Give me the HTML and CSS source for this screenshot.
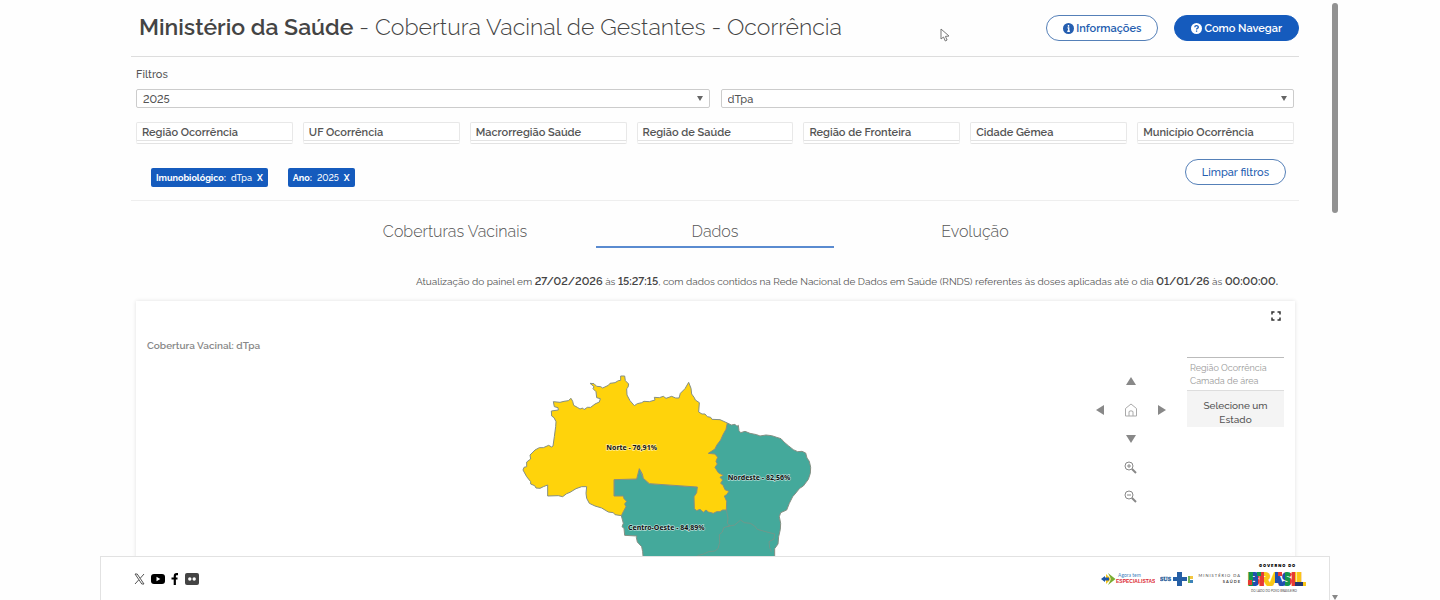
FILE: index.html
```html
<!DOCTYPE html>
<html lang="pt-BR">
<head>
  <meta charset="UTF-8">
  <title>Cobertura Vacinal de Gestantes</title>
  <link rel="stylesheet" href="styles.css">
</head>
<body>
  <div class="frame">
    <div class="app">
      <main class="content">
        <header class="header">
          <h1><strong>Ministério da Saúde</strong> - Cobertura Vacinal de Gestantes - Ocorrência</h1>
          <div class="header-actions">
            <button class="pill">
              <svg width="11" height="11" viewBox="0 0 16 16"><circle cx="8" cy="8" r="8" fill="currentColor"/><path d="M8 3v2.400M6.500 7H8.300V12M6.200 12h3.800" stroke="#fff" stroke-width="2" fill="none"/></svg>
              Informações
            </button>
            <button class="pill pill-primary">
              <svg width="11" height="11" viewBox="0 0 16 16"><circle cx="8" cy="8" r="8" fill="currentColor"/><path d="M5.500 6.200C5.500 3.200 10.600 3.200 10.600 6c0 1.800-2.500 1.700-2.500 3.600M8.100 10.800v2" stroke="#155bbd" stroke-width="1.900" fill="none"/></svg>
              Como Navegar
            </button>
          </div>
        </header>

        <!-- Filtros -->
        <section class="filters">
          <h2>Filtros</h2>
          <div class="selects">
            <div class="select"><select aria-label="Ano"><option>2025</option></select></div>
            <div class="select"><select aria-label="Imunobiológico"><option>dTpa</option></select></div>
          </div>
          <div class="fields">
            <button class="field">Região Ocorrência</button>
            <button class="field">UF Ocorrência</button>
            <button class="field">Macrorregião Saúde</button>
            <button class="field">Região de Saúde</button>
            <button class="field">Região de Fronteira</button>
            <button class="field">Cidade Gêmea</button>
            <button class="field">Município Ocorrência</button>
          </div>
          <div class="applied">
            <div class="chips">
              <button class="chip"><b>Imunobiológico:</b> <span>dTpa</span> <b>X</b></button>
              <button class="chip"><b>Ano:</b> <span>2025</span> <b>X</b></button>
            </div>
            <button class="pill pill-clear">Limpar filtros</button>
          </div>
        </section>

        <nav class="tabs">
          <a href="#coberturas">Coberturas Vacinais</a>
          <a href="#dados" class="active">Dados</a>
          <a href="#evolucao">Evolução</a>
        </nav>

        <p class="update">Atualização do painel em <b>27/02/2026</b> às <b>15:27:15</b>, com dados contidos na Rede Nacional de Dados em Saúde (RNDS) referentes às doses aplicadas até o dia <b>01/01/26</b> às <b>00:00:00.</b></p>

        <!-- Mapa -->
        <section class="card">
          <div class="card-top">
            <button class="icon-btn" aria-label="Tela cheia">
              <svg width="10" height="10" viewBox="0 0 10 10"><path d="M1 3.500V1h2.500M6.500 1H9v2.500M9 6.500V9H6.500M3.500 9H1V6.500" fill="none" stroke="#333" stroke-width="1.500"/></svg>
            </button>
          </div>
          <div class="card-body">
            <h3>Cobertura Vacinal: dTpa</h3>
            <svg class="map" width="294" height="184" viewBox="60 36 882 552">
              <g stroke="#858f83" stroke-width="3" stroke-linejoin="round">
                <path fill="#44a99b" d="M682 189L694 195 705 193 711 199 715 196 717 212 722 218 735 214 750 220 770 224 780 228 798 225 815 227 830 232 843 236 852 246 865 257 880 269 893 275 906 274 917 279 921 294 928 304 932 322 931 340 925 358 910 378 899 385 885 402 878 410 868 430 860 450 842 458 838 470 842 490 841 508 836 530 834 552 824 566 824 600 430 600 428 575 425 560 412 546 409 532 411 528 374 526 372 505 366 500 370 490 364 467 342 408 342 359 410 357 418 326 430 355 448 371 592 381 625 280z"/>
                <path fill="#ffd30b" d="M159 258L163 230 167 200 168 185 162 173 155 168 154 153 175 150 174 143 163 140 160 125 180 127 192 124 205 122 213 115 218 124 221 136 232 142 240 147 248 144 252 149 262 142 272 142 285 132 298 126 301 116 290 113 288 95 279 86 282 80 270 70 282 71 290 79 302 80 308 84 325 76 330 70 345 68 355 62 362 61 362 48 374 48 376 62 386 72 384 82 380 86 381 105 390 122 403 137 412 131 425 128 432 124 448 125 465 120 463 112 478 113 490 109 498 115 515 109 527 114 537 114 541 100 555 86 566 67 573 85 575 102 583 113 586 120 598 128 596 156 606 162 615 162 622 170 632 172 636 178 660 179 682 189 678 208 669 224 662 240 650 256 645 267 625 280 645 282 653 292 648 304 652 312 645 322 655 338 670 346 660 352 668 360 662 370 669 375 675 389 687 394 680 404 673 408 680 424 679 450 668 450 660 455 650 455 640 460 625 456 618 450 610 457 600 448 590 452 583 446 582 410 590 398 592 381 448 371 430 355 427 342 418 326 410 357 342 359 342 408 370 408 372 416 380 424 374 432 378 440 370 455 364 467 345 464 340 458 325 456 305 444 285 438 268 430 260 415 258 400 260 380 245 380 228 386 210 397 200 401 188 410 175 407 143 408 143 375 130 380 120 385 108 384 104 377 92 372 92 365 80 350 69 330 72 322 80 320 80 306 92 297 90 285 105 270 118 263 130 263 146 256 155 261z"/>
                <path fill="none" stroke-width="2" d="M679 450L684 474 682 490 690 497 671 503 667 516 658 524 659 548 654 566 644 573 626 575 611 582 592 587M683 499L704 495 722 480 733 488 751 490 764 498 772 508 797 515 824 522 822 537 807 545 809 563 814 575"/>
              </g>
              <g class="map-labels">
                <text x="319" y="271">Norte - 76,91%</text>
                <text x="683" y="359">Nordeste - 82,56%</text>
                <text x="384" y="511">Centro-Oeste - 84,89%</text>
              </g>
            </svg>
            <div class="tools">
              <div class="pad">
                <button class="up" aria-label="Mover para cima"><svg width="10" height="8" viewBox="0 0 10 8"><path d="M0 8L5 0l5 8z"/></svg></button>
                <button class="left" aria-label="Mover para a esquerda"><svg width="8" height="10" viewBox="0 0 8 10"><path d="M8 0L0 5l8 5z"/></svg></button>
                <button class="home" aria-label="Posição inicial"><svg width="14" height="14" viewBox="0 0 14 14"><path d="M1.500 13V5.500L7 1l5.500 4.500V13zM5 13V8.500Q7 7 9 8.500V13" fill="none" stroke="#aaa"/></svg></button>
                <button class="right" aria-label="Mover para a direita"><svg width="8" height="10" viewBox="0 0 8 10"><path d="M0 0l8 5-8 5z"/></svg></button>
                <button class="down" aria-label="Mover para baixo"><svg width="10" height="8" viewBox="0 0 10 8"><path d="M0 0h10L5 8z"/></svg></button>
                <button class="in" aria-label="Aumentar zoom"><svg width="13" height="13" viewBox="0 0 13 13"><g fill="none" stroke="#888"><circle cx="5" cy="5" r="4"/><path d="M3 5h4M5 3v4"/><path d="M8 8l4 4" stroke-width="2"/></g></svg></button>
                <button class="out" aria-label="Diminuir zoom"><svg width="13" height="13" viewBox="0 0 13 13"><g fill="none" stroke="#888"><circle cx="5" cy="5" r="4"/><path d="M3 5h4"/><path d="M8 8l4 4" stroke-width="2"/></g></svg></button>
              </div>
              <div class="legend">
                <div class="legend-title">Região Ocorrência<br>Camada de área</div>
                <div class="legend-value">Selecione um Estado</div>
              </div>
            </div>
          </div>
        </section>
      </main>

      <footer class="footer">
        <div class="social">
          <a href="#x" aria-label="X"><svg width="11" height="12" viewBox="0 0 11 12"><path d="M1 1h2.200L10 11H7.800zM10 1L6.300 5.200M4.700 6.900L1 11" fill="none" stroke="#555"/></svg></a>
          <a href="#youtube" aria-label="YouTube"><svg width="14" height="12" viewBox="0 0 14 12"><rect y="1" width="14" height="10" rx="3"/><path d="M5.500 3.800v4.400L9.300 6z" fill="#fff"/></svg></a>
          <a href="#facebook" aria-label="Facebook"><svg width="8" height="12" viewBox="0 0 8 12"><path d="M7 1.200H5.600Q3.800 1.200 3.800 3.200V12M.5 5.500h6" fill="none" stroke="#000" stroke-width="2.200"/></svg></a>
          <a href="#flickr" aria-label="Flickr"><svg width="14" height="12" viewBox="0 0 14 12"><rect width="14" height="12" rx="2" fill="#444"/><circle cx="4.800" cy="6" r="1.700" fill="#fff"/><circle cx="9.200" cy="6" r="1.700" fill="#fff"/></svg></a>
        </div>
        <div class="logos">
          <svg width="54" height="16" viewBox="0 0 54 16">
            <path d="M5 3l5 5-5 5z" fill="#f3c51c"/><path d="M7 2l7.500 6L7 14l3-6z" fill="#7aad32"/><path d="M0 8l4-3v1.500h4v3H4V11z" fill="#1d56a5"/>
            <text x="17" y="6" class="logo-script" fill="#3f7fc0">Agora tem</text>
            <text x="15" y="12" class="logo-esp" fill="#dc2b35">ESPECIALISTAS</text>
          </svg>
          <svg width="34" height="16" viewBox="0 0 34 16">
            <text x="0" y="10" class="logo-sus" fill="#245a98" stroke="#245a98" stroke-width=".3">SUS</text>
            <path d="M17 1h5v5h5v4h-5v5h-5v-5h-4V6h4z" fill="#255fa6"/>
            <path d="M28 5h2v7h-2z" fill="#73b253"/><path d="M30 5h3v3h-3z" fill="#f2c641"/><path d="M30 9h3v3h-3z" fill="#3c83b8"/>
          </svg>
          <div class="ministry">MINISTÉRIO DA<br><b>SAÚDE</b></div>
          <svg width="60" height="32" viewBox="0 0 60 32">
            <defs>
              <linearGradient id="brasil" x2="1" y2="0">
                <stop offset="0" stop-color="#16964a"/><stop offset=".08" stop-color="#16964a"/>
                <stop offset=".08" stop-color="#1f4fae"/><stop offset=".18" stop-color="#1f4fae"/>
                <stop offset=".18" stop-color="#e63a33"/><stop offset=".28" stop-color="#e63a33"/>
                <stop offset=".28" stop-color="#f9c616"/><stop offset=".46" stop-color="#f9c616"/>
                <stop offset=".46" stop-color="#1f4fae"/><stop offset=".64" stop-color="#1f4fae"/>
                <stop offset=".64" stop-color="#16964a"/><stop offset=".73" stop-color="#16964a"/>
                <stop offset=".73" stop-color="#e63a33"/><stop offset=".82" stop-color="#e63a33"/>
                <stop offset=".82" stop-color="#f9c616"/><stop offset="1" stop-color="#f9c616"/>
              </linearGradient>
            </defs>
            <text x="13" y="4" class="logo-gov">GOVERNO DO</text>
            <text x="2" y="22" class="logo-brasil" fill="url(#brasil)" stroke="url(#brasil)">BRASIL</text>
            <path d="M2 17h4v5H2zM32 9h4v4h-4z" fill="#e63a33"/><path d="M11 9h4v4h-4z" fill="#16964a"/><path d="M49 19h8v4h-8z" fill="#22366e"/>
            <text x="5" y="29" class="logo-tag">DO LADO DO POVO BRASILEIRO</text>
          </svg>
        </div>
      </footer>
    </div>
    <div class="scrollbar"><div class="thumb"></div><div class="arrow"></div></div>
  </div>
  <svg class="cursor" width="10" height="14" viewBox="0 0 10 14"><path d="M1 1v10l2.500-2 1.800 4 1.800-1-1.700-3.600L9 8z" fill="#fff" stroke="#777"/></svg>
</body>
</html>
```
FILE: styles.css
```css
* {
  box-sizing: border-box;
}

body {
  margin: 0;
  padding: 0 100px;
  background-color: #fefefe;
  color: #555;
  font-family: Raleway, Lato, sans-serif;
  font-size: 11px;
  font-variant-numeric: lining-nums;
}

h1, h2, h3, p {
  margin: 0;
}

button, select {
  font-family: inherit;
  font-size: 11px;
  font-variant-numeric: inherit;
  color: inherit;
  cursor: pointer;
}

.frame {
  display: flex;
  height: 100vh;
  overflow: hidden;
}

.app {
  flex: 1;
  min-width: 0;
  display: flex;
  flex-direction: column;
}

.content {
  flex: 1;
  min-height: 0;
  overflow: hidden;
  padding: 0 31px;
}

/* Cabeçalho */
.header {
  display: flex;
  justify-content: space-between;
  align-items: center;
  height: 57px;
  padding-left: 8px;
  border-bottom: 1px solid #ddd;
}

.header h1 {
  font-size: 23px;
  line-height: 28px;
  font-weight: 300;
  color: #444;
  padding-bottom: 2px;
}

.header h1 strong {
  font-weight: 600;
}

.header-actions {
  display: flex;
  gap: 16px;
}

.pill {
  display: flex;
  align-items: center;
  justify-content: center;
  gap: 2px;
  height: 26px;
  padding: 1px 16px 0;
  border: 1px solid #5580b8;
  border-radius: 13px;
  background-color: #fff;
  color: #255eb0;
  font-weight: 600;
}

.pill-primary {
  background-color: #155bbd;
  border-color: #155bbd;
  color: #fff;
}

/* Filtros */
.filters {
  padding: 9px 5px 0;
  height: 144px;
  border-bottom: 1px solid #eee;
}

.filters h2 {
  font-size: 11px;
  line-height: 18px;
  font-weight: 500;
  margin-bottom: 5px;
}

.selects {
  display: flex;
  gap: 11px;
  margin-bottom: 14px;
}

.select {
  position: relative;
  flex: 1;
}

.select select {
  display: block;
  width: 100%;
  height: 19px;
  padding: 1px 6px 0;
  border: 1px solid #ccc;
  border-radius: 2px;
  background-color: #fff;
  appearance: none;
  font-weight: 500;
}

.select::after {
  content: "";
  position: absolute;
  right: 7px;
  top: 7px;
  border: 3px solid transparent;
  border-top: 5px solid #666;
  border-bottom: 0;
}

.fields {
  display: flex;
  gap: 10px;
}

.field {
  flex: 1;
  height: 22px;
  padding: 1px 5px 0;
  border: 1px solid #e8e8e8;
  border-bottom: 4px double #e3e3e3;
  border-radius: 2px;
  background-color: #fff;
  text-align: left;
  font-weight: 600;
  white-space: nowrap;
}

.applied {
  display: flex;
  justify-content: space-between;
  padding: 15px 8px 0 15px;
}

.chips {
  display: flex;
  gap: 20px;
  padding-top: 9px;
}

.chip {
  display: flex;
  align-items: center;
  gap: 5px;
  height: 19px;
  padding: 0 5px;
  border: 0;
  border-radius: 2px;
  background-color: #155bbd;
  color: #fff;
  font-size: 9px;
  font-weight: 500;
}

.chip b {
  font-weight: 700;
}

.pill-clear {
  font-weight: 500;
}

/* Abas */
.tabs {
  display: flex;
  justify-content: center;
  gap: 22px;
  padding-top: 13px;
}

.tabs a {
  width: 238px;
  height: 34px;
  border-bottom: 2px solid transparent;
  color: #555;
  font-size: 16px;
  font-weight: 300;
  line-height: 35px;
  text-align: center;
  text-decoration: none;
}

.tabs a.active {
  border-bottom-color: #5a8bd0;
}

.update {
  padding: 25px 21px 0 0;
  font-size: 10px;
  line-height: 18px;
  text-align: right;
}

.update b {
  color: #444;
  font-size: 11px;
  font-weight: 600;
}

/* Cartão do mapa */
.card {
  margin: 10px 4px 0 5px;
  height: 400px;
  background-color: #fff;
  box-shadow: 0 0 4px rgba(0, 0, 0, 0.12);
}

.card-top {
  display: flex;
  justify-content: flex-end;
  padding: 7px 11px 0;
}

.icon-btn {
  display: flex;
  align-items: center;
  justify-content: center;
  width: 16px;
  height: 16px;
  padding: 0;
  border: 0;
  background: none;
}

.card-body {
  display: grid;
  grid-template-columns: 4fr 294px 5fr;
  align-items: start;
  padding-top: 12px;
}

.card-body h3 {
  padding: 0 11px;
  font-size: 10px;
  font-weight: 600;
  line-height: 20px;
  color: #888;
}

.map {
  margin-top: 36px;
}

.map-labels text {
  font-family: "Noto Sans", sans-serif;
  font-size: 21px;
  font-weight: 700;
  fill: #111;
  stroke: #fff;
  stroke-width: 4;
  stroke-opacity: 0.6;
  paint-order: stroke;
}

.tools {
  display: flex;
  justify-content: flex-end;
  gap: 10px;
  padding: 21px 11px 0 0;
}

.pad {
  display: grid;
  grid-template-columns: repeat(3, 31px);
  grid-auto-rows: 29px;
  grid-template-areas: ". up ." "left home right" ". down ." ". in ." ". out .";
  padding-top: 9px;
}

.pad button {
  display: flex;
  align-items: center;
  justify-content: center;
  padding: 0;
  border: 0;
  background: none;
  fill: #888;
}

.up { grid-area: up; }
.left { grid-area: left; }
.home { grid-area: home; }
.right { grid-area: right; }
.down { grid-area: down; }
.in { grid-area: in; }
.out { grid-area: out; }

.legend {
  width: 97px;
  border-top: 1px solid #bbb;
}

.legend-title {
  padding: 4px 3px 2px;
  border-bottom: 1px solid #ddd;
  color: #999;
  font-size: 9px;
  line-height: 13px;
}

.legend-value {
  padding: 8px 12px 0;
  background-color: #f4f4f4;
  font-size: 10px;
  font-weight: 500;
  line-height: 14px;
  text-align: center;
}

/* Rodapé */
.footer {
  display: flex;
  justify-content: space-between;
  align-items: center;
  height: 44px;
  padding: 0 23px 0 33px;
  border: 1px solid #e2e2e2;
  border-bottom: 0;
  background-color: #fff;
}

.social, .logos {
  display: flex;
  align-items: center;
}

.social {
  gap: 6px;
}

.social a, .social svg {
  display: block;
}

.logos {
  gap: 5px;
}

.ministry {
  font-family: Lato, sans-serif;
  font-size: 4px;
  line-height: 6px;
  letter-spacing: 1px;
  text-align: right;
  color: #444;
}

.logo-script {
  font: 5px Lato, sans-serif;
}

.logo-esp {
  font: 700 5px "Liberation Sans", sans-serif;
}

.logo-sus {
  font: 700 6px "Liberation Serif", serif;
}

.logo-gov {
  font: 900 4px Inter, sans-serif;
  letter-spacing: 1px;
}

.logo-brasil {
  font: 900 17px Lato, sans-serif;
  stroke-width: 2;
}

.logo-tag {
  font: 3px Lato, sans-serif;
  fill: #444;
}

/* Barra de rolagem */
.scrollbar {
  display: flex;
  flex-direction: column;
  align-items: center;
  justify-content: space-between;
  width: 10px;
  padding-top: 3px;
}

.thumb {
  width: 6px;
  height: 210px;
  border-radius: 3px;
  background-color: #929292;
}

.arrow {
  border: 3px solid transparent;
  border-top: 5px solid #888;
  border-bottom: 0;
}

.cursor {
  position: absolute;
  left: 940px;
  top: 28px;
}
```
